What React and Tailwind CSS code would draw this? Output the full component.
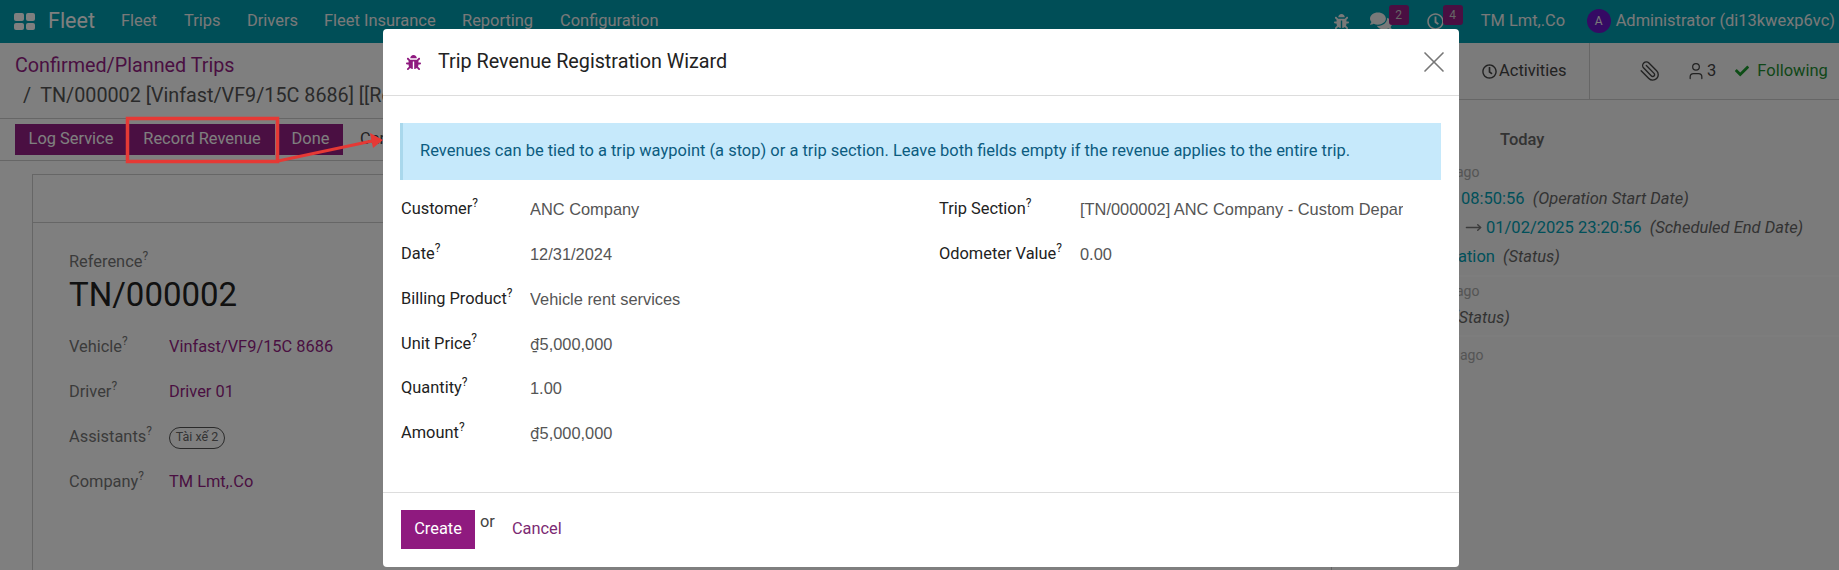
// Fleet trip form with the revenue wizard dialog open on top.
import { FaBug, FaComments, FaRegClock, FaCheck } from 'react-icons/fa';
import { X, Paperclip, User, MoveRight } from 'lucide-react';

const menu = [
  ['Fleet', 'w-[63px]'],
  ['Trips', 'w-[63px]'],
  ['Drivers', 'w-[77px]'],
  ['Fleet Insurance', 'w-[138px]'],
  ['Reporting', 'w-[98px]'],
  ['Configuration', 'w-[110px]'],
];

const leftFields = [
  ['Customer', 'ANC Company', 'h-[45px]'],
  ['Date', '12/31/2024', 'h-[44px]'],
  ['Billing Product', 'Vehicle rent services', 'h-[46px]'],
  ['Unit Price', <Money key="unit" />, 'h-[44px]'],
  ['Quantity', '1.00', 'h-[45px]'],
  ['Amount', <Money key="amount" />, 'h-[45px]'],
];

const rightFields = [
  ['Trip Section', '[TN/000002] ANC Company - Custom Departure', 'h-[45px]'],
  ['Odometer Value', '0.00', 'h-[44px]'],
];

function Money() {
  return (
    <>
      <span className="font-['DejaVu_Sans',sans-serif] text-[15px]">₫</span>5,000,000
    </>
  );
}

function Help() {
  return <sup className="relative -top-[7px] text-[12px] font-normal align-baseline">?</sup>;
}

function Badge({ className, children }) {
  return (
    <span className={`absolute flex h-[20px] w-[20px] items-center justify-center rounded-[3px] bg-[#941e84] text-[12px] text-[#ccc] ${className}`}>
      {children}
    </span>
  );
}

function TopBar() {
  return (
    <header className="flex h-[43px] items-center bg-[#009cae] pl-[14px] pr-[4px] text-[16.45px] text-[#f2f2f2]">
      <div className="grid h-[17px] w-[21px] grid-cols-2 gap-[2px]">
        <i className="rounded-[2px] bg-white" />
        <i className="rounded-[2px] bg-white" />
        <i className="rounded-[2px] bg-white" />
        <i className="rounded-[2px] bg-white" />
      </div>
      <span className="ml-[13px] w-[73px] text-[21.5px] text-white">Fleet</span>
      {menu.map(([label, width]) => (
        <span key={label} className={width}>{label}</span>
      ))}
      <div className="ml-auto flex items-center">
        <FaBug className="h-[15px] w-[15px]" />
        <span className="relative ml-[21px] w-[57px]">
          <FaComments className="h-[20px] w-[22px]" />
          <Badge className="-top-[6px] left-[19px]">2</Badge>
        </span>
        <span className="relative w-[54px]">
          <FaRegClock className="h-[17px] w-[17px]" />
          <Badge className="-top-[8px] left-[16px]">4</Badge>
        </span>
        <span className="w-[106px]">TM Lmt,.Co</span>
        <span className="flex h-[24px] w-[24px] items-center justify-center rounded-full bg-[#6a14c8] text-[12px]">A</span>
        <span className="ml-[5px]">Administrator (di13kwexp6vc)</span>
      </div>
    </header>
  );
}

function ControlPanel() {
  return (
    <div className="flex h-[118px] flex-col border-b border-[#ccc] bg-white">
      <div className="flex h-[76px] border-b border-[#ccc]">
        <div className="w-[1589px] pl-[15px] pt-[9px]">
          <p className="text-[19.75px] leading-[27px] text-[#941e84]">Confirmed/Planned Trips</p>
          <p className="mt-[3px] pl-[8px] text-[19.75px] leading-[27px] text-[#555]">/<span className="ml-[9px]">TN/000002 [Vinfast/VF9/15C 8686] [[Road]]</span></p>
        </div>
      </div>
      <div className="flex pl-[15px] pt-[5px] text-[16.4px]">
        <button type="button" className="h-[31px] w-[112px] bg-[#941e84] text-white">Log Service</button>
        <button type="button" className="ml-[2px] h-[31px] w-[146px] bg-[#941e84] text-white">Record Revenue</button>
        <button type="button" className="ml-[3px] h-[31px] w-[65px] bg-[#941e84] text-white">Done</button>
        <button type="button" className="ml-[17px] h-[31px] text-[#444]">Cancel</button>
      </div>
    </div>
  );
}

function TripSheet() {
  const rows = [
    ['Vehicle', 'Vinfast/VF9/15C 8686'],
    ['Driver', 'Driver 01'],
  ];
  return (
    <div className="ml-[32px] mt-[13px] h-[400px] w-[1300px] border border-[#ccc] bg-white text-[16.4px]">
      <div className="h-[48px] border-b border-[#ccc]" />
      <div className="pl-[36px] pt-[27px]">
        <p className="leading-[24px] text-[#777]">Reference<Help /></p>
        <p className="text-[33px] leading-[42px] text-[#222]">TN/000002</p>
        <div className="mt-[9px]">
          {rows.map(([label, value]) => (
            <div key={label} className="flex h-[45px] items-center">
              <span className="w-[100px] text-[#777]">{label}<Help /></span>
              <span className="text-[#941e84]">{value}</span>
            </div>
          ))}
          <div className="flex h-[45px] items-center">
            <span className="w-[100px] text-[#777]">Assistants<Help /></span>
            <span className="flex h-[22px] w-[56px] items-center justify-center rounded-full border border-[#555] text-[12.5px] text-[#666]">Tài xế 2</span>
          </div>
          <div className="flex h-[45px] items-center">
            <span className="w-[100px] text-[#777]">Company<Help /></span>
            <span className="text-[#941e84]">TM Lmt,.Co</span>
          </div>
        </div>
      </div>
    </div>
  );
}

function Chatter() {
  return (
    <aside className="absolute right-0 top-[43px] h-[527px] w-[380px] bg-[#f6f6f6] text-[16.5px]">
      <div className="flex h-[57px] items-center border-b border-[#ccc] text-[#444]">
        <div className="flex h-full w-[130px] items-center pl-[23px]">
          <FaRegClock className="h-[15px] w-[15px]" />
          <span className="ml-[2px]">Activities</span>
        </div>
        <div className="flex h-full flex-1 items-center border-l border-[#ccc]">
          <Paperclip className="ml-[49px] h-[22px] w-[22px] -scale-x-100" strokeWidth={1.5} />
          <User className="ml-[25px] h-[20px] w-[20px]" strokeWidth={1.5} />
          <span className="ml-[1px]">3</span>
          <FaCheck className="ml-[19px] h-[14px] w-[14px] text-[#1a9a2c]" />
          <span className="ml-[8px] text-[#1f8f33]">Following</span>
        </div>
      </div>
      <p className="ml-[41px] mt-[30px] font-medium leading-[20px] text-[#666]">Today</p>
      <div className="mt-[10px] h-[117px] border-b-2 border-[#fbfbfb]">
        <p className="-ml-[3px] text-[14px] leading-[24px] text-[#aaa]">ago</p>
        <p className="pl-[2px] leading-[29px] text-[#00a0b4]">08:50:56 &nbsp;<em className="text-[#666]">(Operation Start Date)</em></p>
        <p className="flex items-center pl-[6px] leading-[29px] text-[#00a0b4]">
          <MoveRight className="mr-[4px] h-[17px] w-[17px] text-[#777]" />
          <span>01/02/2025 23:20:56 &nbsp;<em className="text-[#666]">(Scheduled End Date)</em></span>
        </p>
        <p className="-ml-[1px] leading-[29px] text-[#00a0b4]">ation &nbsp;<em className="text-[#666]">(Status)</em></p>
      </div>
      <div className="h-[60px] border-b-2 border-[#fbfbfb] pt-[2px]">
        <p className="-ml-[3px] text-[14px] leading-[24px] text-[#aaa]">ago</p>
        <p className="-ml-[6px] mt-[3px] leading-[24px] text-[#666]"><em>(Status)</em></p>
      </div>
      <p className="mt-[6px] pl-[1px] text-[14px] leading-[24px] text-[#aaa]">ago</p>
    </aside>
  );
}

function Field({ label, value, height, labelWidth }) {
  return (
    <div className={`flex items-center ${height}`}>
      <span className={`${labelWidth} shrink-0 text-[16.4px] text-[#222]`}>{label}<Help /></span>
      <span className="w-[323px] overflow-hidden whitespace-nowrap font-['Liberation_Sans',sans-serif] text-[16.4px] text-[#555]">{value}</span>
    </div>
  );
}

function Wizard() {
  return (
    <div className="absolute left-[383px] top-[29px] flex h-[538px] w-[1076px] flex-col rounded-[4px] bg-white">
      <div className="flex h-[67px] items-center border-b border-[#ddd] pl-[23px] pr-[7px]">
        <FaBug className="h-[15px] w-[15px] text-[#8f1a7f]" />
        <h2 className="ml-[17px] text-[19.75px] text-[#222]">Trip Revenue Registration Wizard</h2>
        <X className="ml-auto h-[36px] w-[36px] text-[#777]" strokeWidth={1.1} />
      </div>
      <div className="ml-[17px] mr-[18px] mt-[27px] flex h-[57px] items-center border-l-[3px] border-[#a9d8ec] bg-[#c6e9fb] pl-[17px] text-[16.48px] text-[#0c5c80]">
        Revenues can be tied to a trip waypoint (a stop) or a trip section. Leave both fields empty if the revenue applies to the entire trip.
      </div>
      <div className="flex flex-1 pl-[18px] pt-[7px]">
        <div className="w-[538px]">
          {leftFields.map(([label, value, height]) => (
            <Field key={label} label={label} value={value} height={height} labelWidth="w-[129px]" />
          ))}
        </div>
        <div>
          {rightFields.map(([label, value, height]) => (
            <Field key={label} label={label} value={value} height={height} labelWidth="w-[141px]" />
          ))}
        </div>
      </div>
      <div className="flex h-[75px] items-start border-t border-[#ddd] pl-[18px] pt-[17px] text-[16.4px]">
        <button type="button" className="h-[39px] w-[74px] bg-[#8f1a7f] text-white">Create</button>
        <span className="ml-[5px] text-[#444]">or</span>
        <button type="button" className="ml-[17px] h-[39px] text-[#7c2a73]">Cancel</button>
      </div>
    </div>
  );
}

export default function App() {
  return (
    <div className="relative h-[570px] w-[1839px] overflow-hidden bg-white font-['Roboto',sans-serif]">
      <TopBar />
      <ControlPanel />
      <TripSheet />
      <Chatter />

      {/* Dimmed backdrop behind the dialog */}
      <div className="absolute inset-0 bg-black/50" />

      {/* Red annotation drawn over the screenshot */}
      <svg className="absolute left-0 top-0" width="400" height="180" viewBox="0 0 400 180">
        <rect x="127.5" y="118.5" width="150" height="43" fill="none" stroke="#e53935" strokeWidth="3.5" />
        <line x1="278" y1="161" x2="372" y2="141" stroke="#e53935" strokeWidth="3" />
        <polygon points="383,140 370,133 373,148" fill="#e53935" />
      </svg>

      <Wizard />
    </div>
  );
}
